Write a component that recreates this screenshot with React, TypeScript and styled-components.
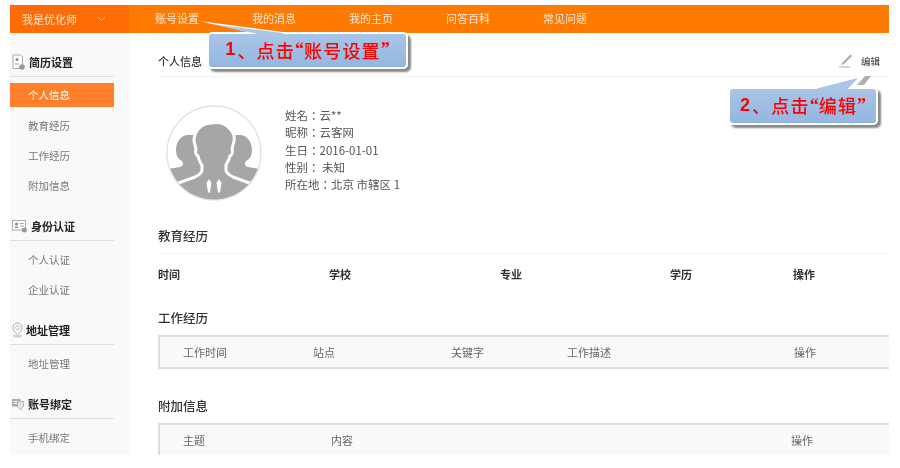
import React from "react";
import styled, { createGlobalStyle } from "styled-components";

const Global = createGlobalStyle`
  html, body { margin: 0; padding: 0; background: #fff; }
  body { font-family: "Noto Sans CJK SC", "Liberation Sans", sans-serif; }
`;

const Page = styled.div`
  position: relative;
  width: 900px;
  height: 468px;
  padding: 5px 11px 13px 10px;
  box-sizing: border-box;
  overflow: hidden;
  background: #fff;
  filter: blur(0.4px);
`;

const Frame = styled.div`
  height: 450px;
  display: flex;
  flex-direction: column;
  overflow: hidden;
`;

const TopBar = styled.header`
  flex: 0 0 28px;
  display: flex;
  background: #ff7a00;
  color: #fff;
  font-size: 11px;
  line-height: 26px;
`;

const Brand = styled.div`
  width: 119px;
  flex: none;
  display: flex;
  align-items: center;
  padding-left: 12px;
  box-sizing: border-box;
  background: #ff6c05;
  color: #ffe9d6;
`;

const Chevron = styled.svg`
  margin-left: 20px;
  width: 9px;
  height: 6px;
`;

const NavList = styled.nav`
  display: flex;
  padding-left: 26px;
  gap: 53px;
  color: #ffe9d6;
`;

const Body = styled.div`
  flex: 1;
  display: flex;
  min-height: 0;
`;

const Sidebar = styled.aside`
  width: 119px;
  flex: none;
  padding-top: 19px;
  box-sizing: border-box;
  background: #f9f9f9;
`;

const SideGroup = styled.section`
  width: 104px;
  margin-bottom: 15px;
`;

const SideHead = styled.h3<{ $gap: number }>`
  display: flex;
  align-items: center;
  gap: ${(p) => p.$gap}px;
  height: 20px;
  margin: 0 0 4px;
  padding: 0 0 4px 2px;
  border-bottom: 1px solid #dedede;
  color: #222;
  font-size: 11px;
  font-weight: 700;
  line-height: 20px;
  box-sizing: content-box;
`;

const SideItem = styled.div<{ $active?: boolean }>`
  height: ${(p) => (p.$active ? 24 : 30)}px;
  margin: ${(p) => (p.$active ? "6px 0 4px" : "0")};
  padding-left: 18px;
  background: ${(p) => (p.$active ? "#ff7f2a" : "transparent")};
  color: ${(p) => (p.$active ? "#fff" : "#777")};
  font-size: 10.5px;
  line-height: ${(p) => (p.$active ? 24 : 30)}px;
`;

const Main = styled.main`
  flex: 1;
  min-width: 0;
  padding-left: 29px;
`;

const InfoBar = styled.div`
  height: 44px;
  display: flex;
  align-items: center;
  justify-content: space-between;
  padding: 12px 9px 0 0;
  box-sizing: border-box;
  border-bottom: 1px solid #f2f2f2;
  color: #333;
  font-size: 11px;
  font-weight: 500;
`;

const EditLink = styled.div`
  display: flex;
  align-items: center;
  gap: 8px;
  font-size: 9.5px;
  font-weight: 500;
  color: #555;
`;

const Profile = styled.div`
  display: flex;
  height: 144px;
  padding: 28px 0 0 8px;
  box-sizing: border-box;
`;

const ProfileLines = styled.div`
  margin: 2px 0 0 23px;
  font-family: "Noto Sans CJK TC", "Liberation Sans", sans-serif;
  font-size: 11.5px;
  line-height: 17.3px;
  color: #555;
`;

const SectionTitle = styled.h2<{ $rule?: boolean }>`
  height: 32px;
  margin: 0;
  color: #333;
  font-size: 12.5px;
  font-weight: 500;
  line-height: 30px;
  box-sizing: border-box;
  ${(p) => (p.$rule ? "border-bottom: 1px solid #f2f2f2; height: 33px;" : "")}
`;

const Columns = styled.div<{ $cols: string; $h: number; $bold?: boolean; $boxed?: boolean; $open?: boolean }>`
  display: grid;
  grid-template-columns: ${(p) => p.$cols};
  align-items: center;
  height: ${(p) => p.$h}px;
  box-sizing: border-box;
  color: ${(p) => (p.$bold ? "#333" : "#666")};
  font-size: 11px;
  font-weight: ${(p) => (p.$bold ? 700 : 400)};
  ${(p) =>
    p.$boxed
      ? `background: #f9f9f9; border-top: 2px solid #ddd; border-left: 2px solid #ddd; ${
          p.$open ? "" : "border-bottom: 2px solid #ddd;"
        }`
      : ""}
`;

const Gap = styled.div<{ $h: number }>`
  height: ${(p) => p.$h}px;
`;

const Callout = styled.div<{ $left: number; $top: number; $w: number; $h: number }>`
  position: absolute;
  left: ${(p) => p.$left}px;
  top: ${(p) => p.$top}px;
  width: ${(p) => p.$w}px;
  height: ${(p) => p.$h}px;
  display: flex;
  align-items: center;
  justify-content: center;
  padding-bottom: 2px;
  box-sizing: border-box;
  border: 2px solid #fff;
  border-radius: 5px;
  background: linear-gradient(#a9c5e7, #93b6e0);
  box-shadow: 3px 3px 2px #8a8a8a;
  color: #f00;
  font-size: 18px;
  font-weight: 500;
  letter-spacing: 1.2px;
  white-space: nowrap;
`;

const Num = styled.b`
  font-family: "Liberation Sans", sans-serif;
  font-weight: 700;
  margin-right: 1px;
`;

const Quote = styled.span`
  font-family: "Liberation Serif", serif;
  font-weight: 700;
  letter-spacing: 0;
`;

const Tail = styled.svg<{ $left: number; $top: number }>`
  position: absolute;
  left: ${(p) => p.$left}px;
  top: ${(p) => p.$top}px;
  overflow: visible;
`;

const Avatar = () => (
  <svg width="96" height="96" viewBox="0 0 96 96">
    <defs>
      <clipPath id="disc"><circle cx="48" cy="48" r="46.5" /></clipPath>
    </defs>
    <circle cx="48" cy="48" r="47" fill="#fff" stroke="#e4e4e4" strokeWidth="1.500" />
    <g clipPath="url(#disc)">
      <path fill="#a6a6a6" d="M10 45C10 36 16 30 22 30H32L36 66 32 78 2 82V64L14 62C17 61 18 59 16 56 12 54 10 50 10 45z" />
      <path fill="#a6a6a6" d="M86 45C86 36 80 30 74 30H64L60 66 64 78 94 82V64L82 62C79 61 78 59 80 56 84 54 86 50 86 45z" />
      <path
        fill="#a6a6a6"
        stroke="#fff"
        strokeWidth="3"
        d="M28 36C28 25 36 18 46 18 52 17 58 18 62 22 66 25 69 30 68 36L66 44C67 47 66 50 64 51 63 55 61 58 60 60V65C60 68 63 70 67 72L92 81V100H4V81L29 72C33 70 36 68 36 65V60C34 58 33 55 32 51 30 50 29 47 30 44Z"
      />
      <path fill="#fff" d="M43 74l2.500 4-1.500 9.500h-2L40.500 78zM53 74l2.500 4-1.500 9.500h-2L50.500 78z" />
    </g>
  </svg>
);

const ResumeIcon = () => (
  <svg width="13" height="16" viewBox="0 0 13 16">
    <path d="M1 1h7.500l2 2v11.500H1z" fill="#fff" stroke="#aaa" />
    <circle cx="5" cy="5.500" r="1.500" fill="#888" />
    <path d="M3 10h4" stroke="#999" />
    <circle cx="10" cy="13" r="2.800" fill="#999" />
  </svg>
);

const IdIcon = () => (
  <svg width="15" height="14" viewBox="0 0 15 14">
    <rect x="0.500" y="1.500" width="13" height="9.500" fill="#fff" stroke="#aaa" />
    <circle cx="4.500" cy="5" r="1.500" fill="#888" />
    <path d="M2.500 9c0-2 4-2 4 0z" fill="#888" />
    <path d="M8 4.500h4M8 7h4" stroke="#aaa" />
    <circle cx="12.300" cy="11" r="2.500" fill="#999" />
  </svg>
);

const PinIcon = () => (
  <svg width="11" height="16" viewBox="0 0 11 16">
    <path d="M5.500 1a4.500 4.500 0 0 1 4.500 4.500C10 8.700 5.500 12.500 5.500 12.500S1 8.700 1 5.500A4.500 4.500 0 0 1 5.500 1z" fill="#fff" stroke="#aaa" />
    <circle cx="5.500" cy="5.500" r="2" fill="none" stroke="#bbb" />
    <ellipse cx="5.500" cy="14" rx="4.500" ry="1.500" fill="#d0d0d0" />
  </svg>
);

const BindIcon = () => (
  <svg width="12" height="13" viewBox="0 0 12 13">
    <rect x="0" y="1" width="8.500" height="7.500" fill="#aaa" />
    <path d="M1.500 3.500h5M1.500 5.500h5" stroke="#fff" />
    <path d="M5.500 3.500h6v5L8.500 12l-3-3z" fill="#e4e4e4" stroke="#aaa" strokeWidth="0.800" />
  </svg>
);

const Pencil = () => (
  <svg width="14" height="15" viewBox="0 0 14 15">
    <path d="M3.500 9.500 11.500 1.500l1.500 1.500-8 8-2.500 1z" fill="#a8a8a8" />
    <path d="M0 14h11" stroke="#bdbdbd" strokeWidth="1.200" />
  </svg>
);

const eduCols = "171px 171px 170px 123px 1fr";
const workCols = "23px 130px 138px 116px 227px 1fr";
const extraCols = "23px 148px 460px 1fr";

export default function App() {
  return (
    <>
      <Global />
      <Page>
        <Frame>
          <TopBar>
            <Brand>
              我是优化师
              <Chevron viewBox="0 0 9 6">
                <path d="M1 1l3.500 3.500L8 1" fill="none" stroke="#ffc79b" />
              </Chevron>
            </Brand>
            <NavList>
              {["账号设置", "我的消息", "我的主页", "问答百科", "常见问题"].map((t) => (
                <span key={t}>{t}</span>
              ))}
            </NavList>
          </TopBar>
          <Body>
            <Sidebar>
              <SideGroup>
                <SideHead $gap={4}><ResumeIcon />简历设置</SideHead>
                <SideItem $active>个人信息</SideItem>
                <SideItem>教育经历</SideItem>
                <SideItem>工作经历</SideItem>
                <SideItem>附加信息</SideItem>
              </SideGroup>
              <SideGroup>
                <SideHead $gap={4}><IdIcon />身份认证</SideHead>
                <SideItem>个人认证</SideItem>
                <SideItem>企业认证</SideItem>
              </SideGroup>
              <SideGroup>
                <SideHead $gap={3}><PinIcon />地址管理</SideHead>
                <SideItem>地址管理</SideItem>
              </SideGroup>
              <SideGroup>
                <SideHead $gap={4}><BindIcon />账号绑定</SideHead>
                <SideItem>手机绑定</SideItem>
              </SideGroup>
            </Sidebar>
            <Main>
              <InfoBar>
                个人信息
                <EditLink><Pencil />编辑</EditLink>
              </InfoBar>
              <Profile>
                <Avatar />
                <ProfileLines>
                  <div>姓名：云**</div>
                  <div>昵称：云客网</div>
                  <div>生日：2016-01-01</div>
                  <div>性别： 未知</div>
                  <div>所在地：北京 市辖区 1</div>
                </ProfileLines>
              </Profile>
              <SectionTitle $rule>教育经历</SectionTitle>
              <Columns $cols={eduCols} $h={40} $bold>
                <span>时间</span><span>学校</span><span>专业</span><span>学历</span><span>操作</span>
              </Columns>
              <Gap $h={9} />
              <SectionTitle>工作经历</SectionTitle>
              <Columns $cols={workCols} $h={34} $boxed>
                <span /><span>工作时间</span><span>站点</span><span>关键字</span><span>工作描述</span><span>操作</span>
              </Columns>
              <Gap $h={22} />
              <SectionTitle>附加信息</SectionTitle>
              <Columns $cols={extraCols} $h={32} $boxed $open>
                <span /><span>主题</span><span>内容</span><span>操作</span>
              </Columns>
            </Main>
          </Body>
        </Frame>
        <Callout $left={207} $top={32} $w={201} $h={37}>
          <Num>1</Num>、点击<Quote>“</Quote>账号设置<Quote>”</Quote>
        </Callout>
        <Tail $left={196} $top={19} width="100" height="18">
          <path d="M3 2 94 14 H56 Z" fill="#fff" />
          <path d="M15 5 87 14 L62 15 Z" fill="#a9c5e7" />
          <path d="M62 14H87V16H62Z" fill="#a9c5e7" />
        </Tail>
        <Callout $left={728} $top={87} $w={150} $h={38}>
          <Num>2</Num>、点击<Quote>“</Quote>编辑<Quote>”</Quote>
        </Callout>
        <Tail $left={810} $top={74} width="66" height="18">
          <path d="M1 14 50 2 63 2 50 14z" fill="#fff" />
          <path d="M47 11 55 2H61L54 11z" fill="#b0b0b0" />
          <path d="M7 14.500 48 4 38 14.500V16H7z" fill="#a9c5e7" />
        </Tail>
      </Page>
    </>
  );
}
